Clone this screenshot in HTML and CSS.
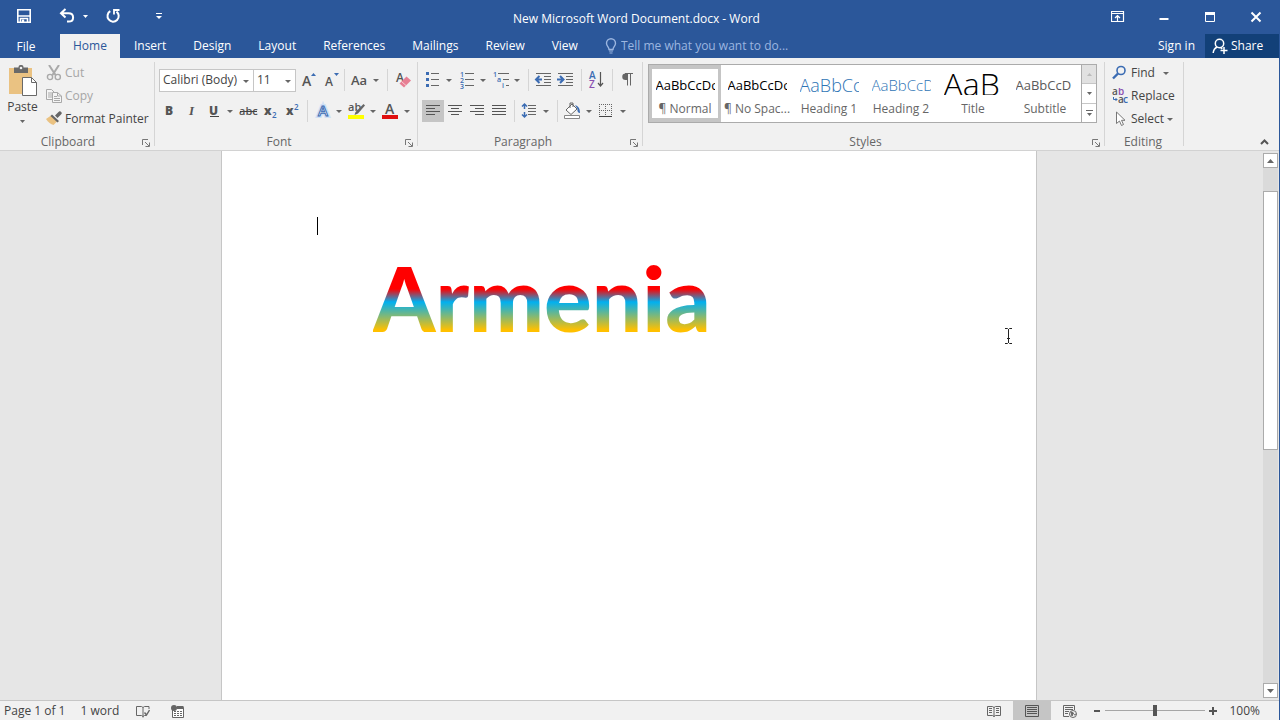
FILE: index.html
```html
<!DOCTYPE html>
<html lang="en">
<head>
<meta charset="utf-8">
<title>New Microsoft Word Document.docx - Word</title>
<link rel="stylesheet" href="styles.css">
</head>
<body>
<div class="app">
  <header class="titlebar">
    <div class="quick">
      <button class="quick-btn" aria-label="Save"><svg width="16" height="16" viewBox="0 0 16 16"><path d="M1.800 1.800h12.400v12.400H1.800z" fill="none" stroke="#fff" stroke-width="1.600"/><path d="M2 8h12M4.500 14v-3.500h7V14" fill="none" stroke="#fff" stroke-width="1.600"/><path d="M6 11.500h2.200V14H6z" fill="#fff"/></svg></button>
      <button class="quick-btn undo" aria-label="Undo"><svg width="16" height="16" viewBox="0 0 16 16"><path d="M6.500 1L2 5.200l4.500 4.200M2 5.200h7.500c3 0 4.600 1.700 4.600 4.200S12.500 13.600 9.500 13.600H8" fill="none" stroke="#fff" stroke-width="2"/></svg></button>
      <button class="caret-btn light" aria-label="Undo list"><svg width="5" height="3" viewBox="0 0 5 3"><path d="M0 0h5L2.500 3z" fill="currentColor"/></svg></button>
      <button class="quick-btn redo" aria-label="Repeat"><svg width="16" height="16" viewBox="0 0 16 16"><path d="M5.300 3.200A5.600 5.600 0 1 0 11.500 3.600" fill="none" stroke="#fff" stroke-width="2"/><path d="M9 6.500V2h5.500" fill="none" stroke="#fff" stroke-width="1.800"/></svg></button>
      <button class="quick-btn more" aria-label="Customize Quick Access Toolbar"><svg width="6" height="6" viewBox="0 0 6 6"><path d="M0 .5h6" stroke="#fff"/><path d="M0 3h6L3 6z" fill="#fff"/></svg></button>
    </div>
    <div class="doc-title">New Microsoft Word Document.docx - Word</div>
    <div class="window-controls">
      <button class="win-btn" aria-label="Ribbon Display Options"><svg width="14" height="12" viewBox="0 0 14 12"><path d="M.5 .5h12v10H.5zM.5 2.500h12M6.500 10V5M4 7l2.500-2.500L9 7" fill="none" stroke="#fff" stroke-width="1.200"/></svg></button>
      <button class="win-btn" aria-label="Minimize"><svg width="12" height="12" viewBox="0 0 12 12"><path d="M1.500 8h9" stroke="#fff" stroke-width="2"/></svg></button>
      <button class="win-btn" aria-label="Maximize"><svg width="12" height="12" viewBox="0 0 12 12"><path d="M1.500 2h9v8.500h-9z" fill="none" stroke="#fff"/><path d="M1 2.500h10" stroke="#fff" stroke-width="3"/></svg></button>
      <button class="win-btn" aria-label="Close"><svg width="12" height="12" viewBox="0 0 12 12"><path d="M1.500 1.500l9 9M10.500 1.500l-9 9" stroke="#fff" stroke-width="2"/></svg></button>
    </div>
  </header>

  <nav class="tabs">
    <button class="tab file">File</button>
    <button class="tab active">Home</button>
    <button class="tab">Insert</button>
    <button class="tab">Design</button>
    <button class="tab">Layout</button>
    <button class="tab">References</button>
    <button class="tab">Mailings</button>
    <button class="tab">Review</button>
    <button class="tab">View</button>
    <label class="tell">
      <svg width="12" height="16" viewBox="0 0 12 16"><path d="M4 11.500C4 9 1.500 8.300 1.500 5.300a4.500 4.500 0 0 1 9 0C10.500 8.300 8 9 8 11.500z" fill="none" stroke="#9cb6e0" stroke-width="1.400"/><path d="M4 13h4M4.500 15h3" stroke="#9cb6e0" stroke-width="1.200"/></svg>
      <input type="text" aria-label="Tell me what you want to do" placeholder="Tell me what you want to do...">
    </label>
    <button class="signin">Sign in</button>
    <button class="share"><svg width="16" height="16" viewBox="0 0 16 16"><circle cx="7.500" cy="5.500" r="4.200" fill="none" stroke="#fff" stroke-width="1.500"/><path d="M1.200 15c.3-3.500 1.800-5 4-6M8.500 9.300l1.800 1.500M8.500 12.500h7M12 9v7" fill="none" stroke="#fff" stroke-width="1.500"/></svg>Share</button>
  </nav>

  <section class="ribbon">
    <div class="group clipboard">
      <div class="group-body">
        <button class="paste">
          <svg width="29" height="31" viewBox="0 0 29 31"><path d="M1 3h23v26H1z" fill="#eac282"/><path d="M6 2.500h4.500V2q0-2 2-2h1q2 0 2 2v.5H20V8H6z" fill="#696969"/><circle cx="13" cy="3" r="1.300" fill="#f1f1f1"/><path d="M14.500 12.500h9l5 5v13h-14z" fill="#fff" stroke="#696969"/><path d="M23.500 12.500v5h5" fill="none" stroke="#696969"/></svg>
          <span>Paste</span>
          <svg width="5" height="3" viewBox="0 0 5 3"><path d="M0 0h5L2.500 3z" fill="#666"/></svg>
        </button>
        <div class="stack">
          <button class="cmd" disabled><svg width="16" height="16" viewBox="0 0 16 16"><path d="M3 0l6.500 10M13 0L6.500 10" stroke="#a9a9a9" stroke-width="2"/><circle cx="4" cy="12" r="2.600" fill="none" stroke="#a9a9a9" stroke-width="1.400"/><circle cx="11.800" cy="12" r="2.600" fill="none" stroke="#a9a9a9" stroke-width="1.400"/></svg>Cut</button>
          <button class="cmd" disabled><svg width="16" height="16" viewBox="0 0 16 16"><path d="M.5 1.500h5l3 3v7h-8z" fill="#f5f5f5" stroke="#a9a9a9"/><path d="M2 5h4M2 7h4M2 9h4" stroke="#a9a9a9"/><path d="M6.500 4.500h5l4 3.500v6.500h-9z" fill="#f5f5f5" stroke="#a9a9a9"/><path d="M11.500 4.500V8h4M8 8.500h3M8 10.500h6M8 12.500h6" fill="none" stroke="#a9a9a9"/></svg>Copy</button>
          <button class="cmd"><svg width="16" height="16" viewBox="0 0 16 16"><path d="M0 8l5-3.500 6 6L7.500 14C5 13.500 2 11 0 8z" fill="#eac282"/><path d="M6 3.500l7 6.500-1.500 1.500L4.500 5zM9 4.500L12.500 1 14 0l2 2-1 1.500L11.500 7z" fill="#666"/></svg>Format Painter</button>
        </div>
      </div>
      <footer class="group-name">Clipboard<button class="launcher" aria-label="Clipboard settings"><svg width="8" height="8" viewBox="0 0 8 8"><path d="M.5 6V.5H6M3 3l4 4M7.500 3.500v4h-4" fill="none" stroke="#777"/></svg></button></footer>
    </div>

    <div class="group font">
      <div class="group-body rows">
        <div class="row">
          <span class="combo name"><select aria-label="Font"><option>Calibri (Body)</option></select></span>
          <span class="combo size"><select aria-label="Font size"><option>11</option></select></span>
          <button class="tool" aria-label="Increase font size"><svg width="22" height="22" viewBox="0 0 22 22"><text x="6" y="17" class="g14">A</text><path d="M15 7h5l-2.500-3z" fill="#3b6cb3"/></svg></button>
          <button class="tool" aria-label="Decrease font size"><svg width="22" height="22" viewBox="0 0 22 22"><text x="7" y="17" class="g12">A</text><path d="M16 4h5l-2.500 3z" fill="#3b6cb3"/></svg></button>
          <i class="sep"></i>
          <button class="tool split" aria-label="Change case"><svg width="22" height="22" viewBox="0 0 22 22"><text x="2" y="16" class="g13">Aa</text></svg><b class="arrow"></b></button>
          <i class="sep"></i>
          <button class="tool" aria-label="Clear all formatting"><svg width="22" height="22" viewBox="0 0 22 22"><text x="4" y="13" class="g12">A</text><path d="M7.500 14.500l7-7 4.500 4-7 7z" fill="#e77f93"/><path d="M9.500 12.500l4.500 4" stroke="#f7cbd3" stroke-width="1"/></svg></button>
        </div>
        <div class="row">
          <button class="tool" aria-label="Bold"><svg width="22" height="22" viewBox="0 0 22 22"><text x="6" y="15" class="g12 heavy">B</text></svg></button>
          <button class="tool" aria-label="Italic"><svg width="22" height="22" viewBox="0 0 22 22"><text x="8" y="15" class="g13 serif">I</text></svg></button>
          <button class="tool split" aria-label="Underline"><svg width="22" height="22" viewBox="0 0 22 22"><text x="6" y="15" class="g12 heavy">U</text><path d="M7 16.500h9" stroke="#444"/></svg><b class="arrow"></b></button>
          <button class="tool" aria-label="Strikethrough"><svg width="22" height="22" viewBox="0 0 22 22"><text x="2" y="15" class="g11">abc</text><path d="M3 11.500h17" stroke="#444"/></svg></button>
          <button class="tool" aria-label="Subscript"><svg width="22" height="22" viewBox="0 0 22 22"><text x="5" y="15" class="g12 heavy">x</text><text x="13" y="18" class="g8 blue">2</text></svg></button>
          <button class="tool" aria-label="Superscript"><svg width="22" height="22" viewBox="0 0 22 22"><text x="5" y="15" class="g12 heavy">x</text><text x="13" y="10" class="g8 blue">2</text></svg></button>
          <i class="sep"></i>
          <button class="tool split" aria-label="Text effects"><svg width="22" height="22" viewBox="0 0 22 22"><text x="6" y="16" class="g15 glow">A</text><text x="6" y="16" class="g15 outline">A</text></svg><b class="arrow"></b></button>
          <button class="tool split" aria-label="Text highlight color"><svg width="22" height="22" viewBox="0 0 22 22"><text x="2" y="11" class="g11">ab</text><path d="M17.500 4l1.500 1.500-7 8-3.500 1.500 1-3z" fill="#666"/><path d="M2 15h16v4H2z" fill="#ff0"/></svg><b class="arrow"></b></button>
          <button class="tool split" aria-label="Font color"><svg width="22" height="22" viewBox="0 0 22 22"><text x="5" y="14" class="g14">A</text><path d="M2 15h16v4H2z" fill="#e01010"/></svg><b class="arrow"></b></button>
        </div>
      </div>
      <footer class="group-name">Font<button class="launcher" aria-label="Font settings"><svg width="8" height="8" viewBox="0 0 8 8"><path d="M.5 6V.5H6M3 3l4 4M7.500 3.500v4h-4" fill="none" stroke="#777"/></svg></button></footer>
    </div>

    <div class="group paragraph">
      <div class="group-body rows">
        <div class="row">
          <button class="tool split" aria-label="Bullets"><svg width="22" height="22" viewBox="0 0 22 22"><path d="M4 3h3v3H4zM4 9h3v3H4zM4 15h3v3H4z" fill="#3b6cb3"/><path d="M9 4.500h8M9 10.500h8M9 16.500h8" stroke="#666"/></svg><b class="arrow"></b></button>
          <button class="tool split" aria-label="Numbering"><svg width="22" height="22" viewBox="0 0 22 22"><text x="4" y="8" class="g7 blue">1</text><text x="4" y="14" class="g7 blue">2</text><text x="4" y="20" class="g7 blue">3</text><path d="M9 4.500h9M9 10.500h9M9 16.500h9" stroke="#666"/></svg><b class="arrow"></b></button>
          <button class="tool split" aria-label="Multilevel list"><svg width="22" height="22" viewBox="0 0 22 22"><text x="3" y="8" class="g7 blue">1</text><text x="7" y="13" class="g7 blue">a</text><text x="12" y="19" class="g7 blue">i</text><path d="M8 4.500h11M13 10.500h6M16 16.500h3" stroke="#666"/></svg><b class="arrow"></b></button>
          <i class="sep"></i>
          <button class="tool" aria-label="Decrease indent"><svg width="22" height="22" viewBox="0 0 22 22"><path d="M3 4.500h15M11 7.500h7M11 10.500h7M11 13.500h7M3 16.500h15" stroke="#666"/><path d="M9 10.500H4M6.500 7L3 10.500 6.500 14" fill="none" stroke="#3b6cb3" stroke-width="2"/></svg></button>
          <button class="tool" aria-label="Increase indent"><svg width="22" height="22" viewBox="0 0 22 22"><path d="M3 4.500h15M11 7.500h7M11 10.500h7M11 13.500h7M3 16.500h15" stroke="#666"/><path d="M2 10.500h5M5 7l3.500 3.500L5 14" fill="none" stroke="#3b6cb3" stroke-width="2"/></svg></button>
          <i class="sep"></i>
          <button class="tool" aria-label="Sort"><svg width="22" height="22" viewBox="0 0 22 22"><text x="3" y="10" class="g10 blue">A</text><text x="3" y="19" class="g10 purple">Z</text><path d="M14.500 3v14M12 14l2.500 3 2.500-3" fill="none" stroke="#555" stroke-width="1.200"/></svg></button>
          <i class="sep"></i>
          <button class="tool" aria-label="Show paragraph marks"><svg width="22" height="22" viewBox="0 0 22 22"><path d="M15 4.500H8.500a3.200 3.200 0 0 0 0 6.500H10V4.500" fill="#666"/><path d="M10.500 4v12.500M13.500 4v12.500M8 4.500h8" stroke="#666" fill="none"/></svg></button>
        </div>
        <div class="row">
          <button class="tool on" aria-label="Align left"><svg width="22" height="22" viewBox="0 0 22 22"><path d="M4 5.500h14M4 8.500h9M4 11.500h14M4 14.500h9" stroke="#555"/></svg></button>
          <button class="tool" aria-label="Center"><svg width="22" height="22" viewBox="0 0 22 22"><path d="M4 5.500h14M7 8.500h8M4 11.500h14M7 14.500h8" stroke="#555"/></svg></button>
          <button class="tool" aria-label="Align right"><svg width="22" height="22" viewBox="0 0 22 22"><path d="M4 5.500h14M9 8.500h9M4 11.500h14M9 14.500h9" stroke="#555"/></svg></button>
          <button class="tool" aria-label="Justify"><svg width="22" height="22" viewBox="0 0 22 22"><path d="M4 5.500h14M4 8.500h14M4 11.500h14M4 14.500h14" stroke="#555"/></svg></button>
          <i class="sep"></i>
          <button class="tool split" aria-label="Line spacing"><svg width="22" height="22" viewBox="0 0 22 22"><path d="M5.500 4v5M3 6.500L5.500 4 8 6.500M5.500 12v5M3 14.500L5.500 17 8 14.500" fill="none" stroke="#3b6cb3" stroke-width="1.500"/><path d="M9 5.500h8M9 8.500h8M9 11.500h8M9 14.500h8" stroke="#666"/></svg><b class="arrow"></b></button>
          <i class="sep"></i>
          <button class="tool split" aria-label="Shading"><svg width="22" height="22" viewBox="0 0 22 22"><path d="M4 10l6-6 5 5-6 5.500z" fill="#fff" stroke="#666"/><path d="M8 8V3h3v4" fill="none" stroke="#666"/><path d="M13 5c3 1 5 3 5 8-2 0-3-2-2.500-4z" fill="#3b6cb3"/><path d="M2.500 15.500h15v3h-15z" fill="#fff" stroke="#888"/></svg><b class="arrow"></b></button>
          <button class="tool split" aria-label="Borders"><svg width="22" height="22" viewBox="0 0 22 22"><path d="M3 4.500h13M3 10.500h13M3.500 4v12M9.500 4v12M15.500 4v12" stroke="#666" stroke-dasharray="1 1"/><path d="M3 16.500h13" stroke="#444"/></svg><b class="arrow"></b></button>
        </div>
      </div>
      <footer class="group-name">Paragraph<button class="launcher" aria-label="Paragraph settings"><svg width="8" height="8" viewBox="0 0 8 8"><path d="M.5 6V.5H6M3 3l4 4M7.500 3.500v4h-4" fill="none" stroke="#777"/></svg></button></footer>
    </div>

    <div class="group styles">
      <div class="group-body">
        <div class="gallery">
          <button class="style on"><span class="sample">AaBbCcDc</span><span>¶ Normal</span></button>
          <button class="style"><span class="sample">AaBbCcDc</span><span>¶ No Spac...</span></button>
          <button class="style"><span class="sample h1">AaBbCc</span><span>Heading 1</span></button>
          <button class="style"><span class="sample h2">AaBbCcD</span><span>Heading 2</span></button>
          <button class="style"><span class="sample title">AaB</span><span>Title</span></button>
          <button class="style"><span class="sample sub">AaBbCcD</span><span>Subtitle</span></button>
          <div class="gallery-nav">
            <button class="nav-btn off" aria-label="Previous row"><svg width="5" height="3" viewBox="0 0 5 3"><path d="M0 3h5L2.500 0z" fill="#bbb"/></svg></button>
            <button class="nav-btn" aria-label="Next row"><svg width="5" height="3" viewBox="0 0 5 3"><path d="M0 0h5L2.500 3z" fill="#666"/></svg></button>
            <button class="nav-btn" aria-label="More styles"><svg width="7" height="6" viewBox="0 0 7 6"><path d="M0 .5h7" stroke="#666"/><path d="M1 3h5L3.500 6z" fill="#666"/></svg></button>
          </div>
        </div>
      </div>
      <footer class="group-name">Styles<button class="launcher" aria-label="Styles pane"><svg width="8" height="8" viewBox="0 0 8 8"><path d="M.5 6V.5H6M3 3l4 4M7.500 3.500v4h-4" fill="none" stroke="#777"/></svg></button></footer>
    </div>

    <div class="group editing">
      <div class="group-body">
        <div class="stack">
          <button class="cmd"><svg width="16" height="16" viewBox="0 0 16 16"><circle cx="9" cy="5.500" r="4" fill="none" stroke="#3b6cb3" stroke-width="1.600"/><path d="M6 8.500L1 13.500" stroke="#3b6cb3" stroke-width="2.400"/></svg>Find<b class="arrow wide"></b></button>
          <button class="cmd"><svg width="16" height="16" viewBox="0 0 16 16"><text x="0" y="7" class="g10">a</text><text x="6" y="7" class="g10 purple">b</text><text x="6" y="15" class="g10">a</text><text x="11" y="15" class="g10 blue">c</text><path d="M1.500 9v2.500H5M3.500 10L5 11.500 3.500 13" fill="none" stroke="#3b6cb3"/></svg>Replace</button>
          <button class="cmd"><svg width="16" height="16" viewBox="0 0 16 16"><path d="M4.500 1v11.500l3-2.500 2 4.500 2-1-2-4.200h3.500z" fill="#fff" stroke="#777"/></svg>Select<b class="arrow"></b></button>
        </div>
      </div>
      <footer class="group-name">Editing</footer>
    </div>
    <button class="collapse" aria-label="Collapse the ribbon"><svg width="9" height="6" viewBox="0 0 9 6"><path d="M1 5l3.500-3.500L8 5" fill="none" stroke="#555" stroke-width="2"/></svg></button>
  </section>

  <main class="workspace">
    <div class="canvas">
      <article class="page">
        <p class="line"><span class="caret"></span></p>
        <h1 class="wordart">Armenia</h1>
      </article>
      <svg class="pointer" width="9" height="16" viewBox="0 0 9 16"><path d="M1 .5h2.500l1 1 1-1H8M1 15.500h2.500l1-1 1 1H8M4.500 1v14M3 10.500h3" fill="none" stroke="#222"/></svg>
    </div>
    <div class="scrollbar">
      <button class="scroll-btn" aria-label="Scroll up"><svg width="7" height="4" viewBox="0 0 7 4"><path d="M0 4h7L3.500 0z" fill="#666"/></svg></button>
      <div class="track"><div class="thumb"></div></div>
      <button class="scroll-btn" aria-label="Scroll down"><svg width="7" height="4" viewBox="0 0 7 4"><path d="M0 0h7L3.500 4z" fill="#666"/></svg></button>
    </div>
  </main>

  <footer class="status">
    <span>Page 1 of 1</span>
    <span class="words">1 word</span>
    <button class="status-btn proof" aria-label="Proofing"><svg width="14" height="14" viewBox="0 0 14 14"><path d="M7 12.500L5.500 11.500h-5v-9h5L7 3.500l1.500-1H13V5M7 3.500v10M7 12.500L8.500 11.500H10" fill="none" stroke="#666"/><path d="M8.500 8.500l2 2.500 3-5" fill="none" stroke="#666" stroke-width="1.400"/></svg></button>
    <button class="status-btn" aria-label="Macros"><svg width="14" height="14" viewBox="0 0 14 14"><path d="M2.500 3.500h11v10h-11z" fill="#fff" stroke="#666"/><path d="M7 2h6.500v3H7z" fill="#666"/><path d="M4 7.500h8M4 9.500h8M4 11.500h8" stroke="#666" stroke-dasharray="2 1"/><circle cx="4" cy="4" r="3" fill="#666"/></svg></button>
    <div class="views">
      <button class="view" aria-label="Read mode"><svg width="14" height="14" viewBox="0 0 14 14"><path d="M7 3.500L5.500 2.500h-5v9h5L7 12.500l1.500-1h5v-9h-5zM7 3v10" fill="none" stroke="#666"/><path d="M2 4.500h3M2 6.500h3M2 8.500h3M9 4.500h3M9 6.500h3M9 8.500h3" stroke="#666"/></svg></button>
      <button class="view on" aria-label="Print layout"><svg width="14" height="14" viewBox="0 0 14 14"><path d="M.5 1.500h13v11H.5z" fill="none" stroke="#555"/><path d="M2 3.500h10M2 5.500h10M2 7.500h10M2 9.500h10" stroke="#555"/></svg></button>
      <button class="view" aria-label="Web layout"><svg width="14" height="14" viewBox="0 0 14 14"><path d="M6 12.500H.5v-11h11V6" fill="none" stroke="#666"/><path d="M2 3.500h8M2 5.500h8M2 7.500h4M2 9.500h3" stroke="#666"/><circle cx="10" cy="10" r="3.500" fill="#f1f1f1" stroke="#666"/><path d="M8 8l2.500 1L9 12zM11 11l2-1" fill="#666" stroke="#666"/></svg></button>
      <button class="zoom-btn" aria-label="Zoom out"><svg width="8" height="8" viewBox="0 0 8 8"><path d="M1 4h6" stroke="#555" stroke-width="2"/></svg></button>
      <input class="zoom" type="range" min="10" max="190" value="100" aria-label="Zoom">
      <button class="zoom-btn" aria-label="Zoom in"><svg width="8" height="8" viewBox="0 0 8 8"><path d="M0 4h8M4 0v8" stroke="#555" stroke-width="2"/></svg></button>
      <span class="percent">100%</span>
    </div>
  </footer>
</div>
</body>
</html>
```
FILE: styles.css
```css
* { box-sizing: border-box; }
body { margin: 0; color: #444; font: 12px/16px "Open Sans", "Noto Sans", sans-serif; }
button, input, select { margin: 0; padding: 0; border: 0; background: none; color: inherit; font: inherit; }
svg { display: block; flex: none; }
.app { display: flex; flex-direction: column; height: 100vh; border-right: 1px solid #2b579a; }

.titlebar { display: grid; grid-template-columns: 1fr auto 1fr; align-items: center; height: 34px; background: #2b579a; color: #fff; }
.quick { display: flex; align-items: center; padding: 0 0 2px 13px; }
.quick-btn { display: flex; align-items: center; justify-content: center; width: 22px; height: 22px; }
.undo { margin-left: 21px; }
.caret-btn { display: flex; align-items: center; justify-content: center; width: 14px; height: 22px; }
.redo { margin-left: 10px; }
.more { margin-left: 24px; }
.doc-title { padding: 4px 6px 0 0; }
.window-controls { display: flex; justify-content: flex-end; }
.win-btn { display: flex; align-items: center; justify-content: center; width: 46px; height: 32px; }

.tabs { display: flex; height: 24px; background: #2b579a; color: #fff; }
.tab { padding: 0 13px 0 14px; }
.tab.file { width: 52px; padding: 2px 0 0; margin-right: 8px; }
.tab.active { padding: 0 13px; background: #f1f1f1; color: #2b579a; }
.tell { display: flex; flex: 1; align-items: center; gap: 4px; margin-left: 14px; }
.tell input { flex: 1; min-width: 0; outline: 0; }
.tell input::placeholder { color: #9cb6e0; opacity: 1; }
.signin { padding: 0 10px; }
.share { display: flex; align-items: center; gap: 3px; width: 74px; padding-left: 7px; background: #124078; }

.ribbon { display: flex; height: 93px; background: #f1f1f1; border-bottom: 1px solid #d2d2d2; }
.group { display: flex; flex-direction: column; margin: 4px 0; padding-top: 3px; border-right: 1px solid #d5d5d5; }
.group-body { display: flex; flex: 1; align-items: flex-start; }
.group-name { display: flex; position: relative; justify-content: center; height: 12px; padding-right: 18px; color: #666; }
.launcher { position: absolute; right: 4px; bottom: -1px; }
.clipboard { width: 155px; }
.font { width: 263px; padding-left: 4px; }
.paragraph { width: 225px; padding-left: 4px; }
.styles { width: 462px; padding: 2px 7px 0 5px; }
.styles .group-name { padding-right: 14px; }
.styles .launcher { right: -3px; }
.editing { width: 79px; }
.editing .group-name { padding-right: 2px; }

.paste { display: flex; flex-direction: column; align-items: center; width: 44px; padding-left: 1px; }
.paste span { margin: 3px 0 5px; }
.stack { display: flex; flex-direction: column; gap: 7px; padding: 0 0 0 2px; }
.editing .stack { padding-left: 7px; }
.cmd { display: flex; align-items: center; gap: 3px; height: 16px; white-space: nowrap; }
.cmd:disabled { color: #a6a6a6; }
.arrow { width: 0; border: 3px solid transparent; border-top-color: #666; border-bottom: 0; }
.arrow.wide { margin-left: 5px; }

.rows { flex-direction: column; gap: 9px; padding-top: 4px; }
.row { display: flex; align-items: center; height: 22px; }
.tool { display: flex; align-items: center; width: 22px; height: 22px; }
.tool.split { width: 34px; }
.tool .arrow { margin-left: 2px; }
.tool.on { background: #c5c5c5; }
.sep { width: 1px; height: 22px; margin: 0 4px; background: #d5d5d5; }
.combo { position: relative; height: 23px; border: 1px solid #c6c6c6; background: #fff; }
.combo::after { content: ""; position: absolute; top: 10px; right: 4px; border: 3px solid transparent; border-top-color: #666; border-bottom: 0; }
.combo.name { width: 95px; margin-right: -1px; }
.combo.size { width: 43px; }
.combo select { display: block; width: 100%; height: 100%; padding-left: 3px; appearance: none; }
svg text { fill: #555; font-family: "Open Sans", sans-serif; font-weight: 600; }
.g7 { font-size: 7px; }
.g8 { font-size: 8px; }
.g10 { font-size: 10px; }
.g11 { font-size: 11px; }
.g12 { font-size: 12px; }
.g13 { font-size: 13px; }
.g14 { font-size: 14px; }
.g15 { font-size: 15px; }
svg text.heavy { font-weight: 800; }
svg text.serif { font-family: "Liberation Serif", serif; font-style: italic; font-weight: 700; }
svg text.blue { fill: #3b6cb3; }
svg text.purple { fill: #8a4fb0; }
svg text.glow { fill: none; stroke: #cfe0f5; stroke-width: 4px; }
svg text.outline { fill: #fff; stroke: #3b6cb3; stroke-width: 1px; }

.gallery { display: flex; flex: 1; height: 59px; border: 1px solid #ababab; background: #fff; }
.style { display: flex; flex: 1; flex-direction: column; align-items: center; gap: 7px; min-width: 0; padding-top: 2px; border: solid transparent; border-width: 4px 3px; color: #666; line-height: 14px; white-space: nowrap; }
.style.on { border-color: #c5c5c5; }
.sample { display: flex; align-items: flex-end; width: 59px; height: 24px; padding-bottom: 1px; overflow: hidden; color: #000; font-size: 13px; line-height: 18px; }
.sample.h1 { color: #2e74b5; font-size: 18px; font-weight: 300; }
.sample.h2 { color: #2e74b5; font-size: 15px; font-weight: 300; }
.sample.title { font-size: 32px; font-weight: 300; line-height: 20px; }
.sample.sub { color: #5a5a5a; }
.gallery-nav { display: flex; flex-direction: column; width: 15px; border-left: 1px solid #ababab; }
.nav-btn { display: flex; flex: 1; align-items: center; justify-content: center; border-top: 1px solid #c6c6c6; }
.nav-btn.off { border-top: 0; background: #e1e1e1; }
.collapse { align-self: flex-end; margin: 0 10px 5px auto; }

.workspace { display: flex; flex: 1; min-height: 0; background: #e6e6e6; }
.canvas { position: relative; flex: 1; padding-right: 4px; overflow: hidden; }
.page { width: 816px; min-height: 100%; margin: 0 auto; padding: 66px 95px; border: solid #c6c6c6; border-width: 0 1px; background: #fff; }
.line { height: 20px; margin: 0; }
.caret { display: block; width: 1px; height: 18px; background: #000; }
.wordart { width: fit-content; margin: 11px 0 0 56px; background: linear-gradient(#f00 41%, #00b0f0 54%, #ffc000 82%); background-clip: text; color: transparent; font: 900 89px/100px Lato, sans-serif; }
.pointer { position: absolute; top: 177px; left: 1004px; }
.scrollbar { display: flex; flex-direction: column; width: 17px; padding: 2px 1px; }
.scroll-btn { display: flex; align-items: center; justify-content: center; width: 15px; height: 15px; border: 1px solid #ababab; background: #fff; }
.track { flex: 1; padding-top: 23px; background: #dadada; }
.thumb { width: 15px; height: 259px; border: 1px solid #ababab; background: #fff; }

.status { display: flex; align-items: center; height: 20px; padding-left: 4px; border-top: 1px solid #c6c6c6; background: #f1f1f1; }
.words { margin-left: 15px; }
.status-btn { margin-left: 20px; }
.status-btn.proof { margin-left: 17px; }
.views { display: flex; align-items: center; margin-left: auto; height: 100%; padding-right: 19px; }
.view { display: flex; align-items: center; justify-content: center; width: 38px; height: 100%; }
.view.on { background: #c5c5c5; }
.zoom-btn { padding: 0 4px; }
.zoom { width: 100px; height: 12px; appearance: none; background: linear-gradient(#a6a6a6, #a6a6a6) center / 100% 1px no-repeat; }
.zoom::-webkit-slider-thumb { appearance: none; width: 4px; height: 11px; background: #555; }
.percent { margin-left: 8px; }
```
